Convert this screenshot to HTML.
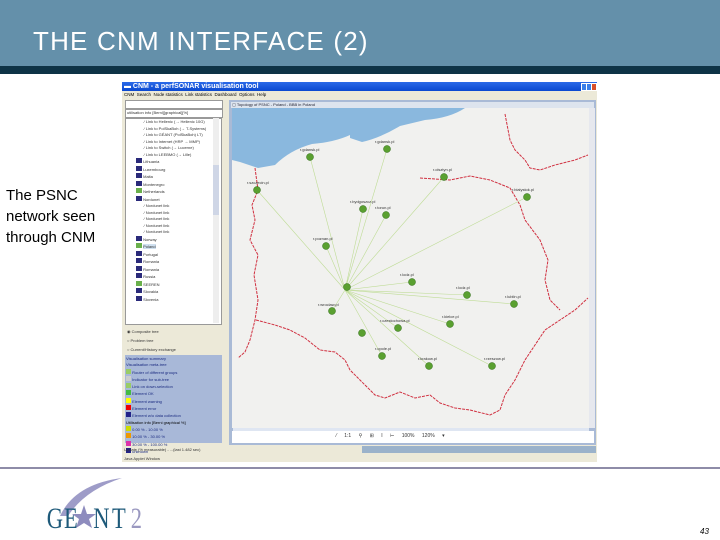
<!DOCTYPE html>
<html><head><style>
body{margin:0;width:720px;height:540px;position:relative;background:#fff;font-family:"Liberation Sans",sans-serif;overflow:hidden}
.a{position:absolute}
.t{font-size:4px;color:#333;white-space:nowrap}
</style></head><body>
<div class="a" style="left:0;top:0;width:720px;height:66px;background:#6490aa"></div>
<div class="a" style="left:0;top:66px;width:720px;height:8px;background:#0e3346"></div>
<div class="a" style="left:33px;top:26px;font-size:26px;color:#fff;letter-spacing:1.2px;line-height:30px">THE CNM INTERFACE (2)</div>
<div class="a" style="left:6px;top:185px;font-size:15px;line-height:21px;color:#000">The PSNC<br>network seen<br>through CNM</div>

<!-- app window -->
<div class="a" style="left:122px;top:82px;width:475px;height:380px;background:#ece9d8"></div>
<div class="a" style="left:122px;top:82px;width:475px;height:9px;background:linear-gradient(#2a6ae8,#0a48d0);color:#fff;font-size:7px;line-height:9px;font-weight:bold">&nbsp;▬ CNM - a perfSONAR visualisation tool</div>
<div class="a" style="left:581px;top:83px;width:4px;height:6px;background:#3b7fe8;border:1px solid #fff"></div>
<div class="a" style="left:586px;top:83px;width:4px;height:6px;background:#3b7fe8;border:1px solid #fff"></div>
<div class="a" style="left:591px;top:83px;width:4px;height:6px;background:#d8502a;border:1px solid #fff"></div>
<div class="a t" style="left:124px;top:92px;font-size:4.5px;color:#000">CNM &nbsp;Search &nbsp;Node statistics &nbsp;Link statistics &nbsp;Dashboard &nbsp;Options &nbsp;Help</div>

<!-- left panel -->
<div class="a" style="left:125px;top:100px;width:96px;height:7px;background:#fff;border:1px solid #999"></div>
<div class="a" style="left:125px;top:109px;width:96px;height:7px;background:#fff;border:1px solid #999"></div>
<div class="a t" style="left:127px;top:110px">utilisation info [Berni][graphical][%]</div>
<div class="a" style="left:125px;top:118px;width:95px;height:205px;background:#fff;border:1px solid #999"></div>
<div class="a" style="left:213px;top:118px;width:6px;height:205px;background:#eee"></div>
<div class="a" style="left:213px;top:165px;width:6px;height:50px;background:#cfd6e6"></div>
<div class="a" style="left:126px;top:119px;width:86px;line-height:6.5px;font-size:4px;color:#333">
<div style="padding-left:18px">⁄ Link to Hellenic (→ Hellenic 10G)</div>
<div style="padding-left:18px">⁄ Link to PolSkaBoh (→ T-Systems)</div>
<div style="padding-left:18px">⁄ Link to GÉANT (PolSkaBoh) LT)</div>
<div style="padding-left:18px">⁄ Link to Internet (HRP → MMP)</div>
<div style="padding-left:18px">⁄ Link to Switch (→ Lucerne)</div>
<div style="padding-left:18px">⁄ Link to LEEBMO (→ Lille)</div>
<div style="padding-left:10px"><span style="display:inline-block;width:6px;height:5px;background:#2a2a7a"></span> Lithuania</div>
<div style="padding-left:10px"><span style="display:inline-block;width:6px;height:5px;background:#2a2a7a"></span> Luxembourg</div>
<div style="padding-left:10px"><span style="display:inline-block;width:6px;height:5px;background:#2a2a7a"></span> Malta</div>
<div style="padding-left:10px"><span style="display:inline-block;width:6px;height:5px;background:#2a2a7a"></span> Montenegro</div>
<div style="padding-left:10px"><span style="display:inline-block;width:6px;height:5px;background:#6ab04c"></span> Netherlands</div>
<div style="padding-left:10px"><span style="display:inline-block;width:6px;height:5px;background:#2a2a7a"></span> Nordunet</div>
<div style="padding-left:18px">⁄ Nordunet link</div>
<div style="padding-left:18px">⁄ Nordunet link</div>
<div style="padding-left:18px">⁄ Nordunet link</div>
<div style="padding-left:18px">⁄ Nordunet link</div>
<div style="padding-left:18px">⁄ Nordunet link</div>
<div style="padding-left:10px"><span style="display:inline-block;width:6px;height:5px;background:#2a2a7a"></span> Norway</div>
<div style="padding-left:10px"><span style="display:inline-block;width:6px;height:5px;background:#6ab04c"></span> <span style="background:#cfe0f0">Poland</span></div>
<div style="padding-left:10px"><span style="display:inline-block;width:6px;height:5px;background:#2a2a7a"></span> Portugal</div>
<div style="padding-left:10px"><span style="display:inline-block;width:6px;height:5px;background:#2a2a7a"></span> Romania</div>
<div style="padding-left:10px"><span style="display:inline-block;width:6px;height:5px;background:#2a2a7a"></span> Romania</div>
<div style="padding-left:10px"><span style="display:inline-block;width:6px;height:5px;background:#2a2a7a"></span> Russia</div>
<div style="padding-left:10px"><span style="display:inline-block;width:6px;height:5px;background:#6ab04c"></span> SEEREN</div>
<div style="padding-left:10px"><span style="display:inline-block;width:6px;height:5px;background:#2a2a7a"></span> Slovakia</div>
<div style="padding-left:10px"><span style="display:inline-block;width:6px;height:5px;background:#2a2a7a"></span> Slovenia</div>
</div>
<div class="a t" style="left:127px;top:327px;line-height:9px">◉ Composite tree<br>○ Problem tree<br>○ Current/History exchange</div>
<div class="a" style="left:125px;top:355px;width:97px;height:88px;background:#a8b8d8"></div>
<div class="a" style="left:126px;top:356px;font-size:4px;line-height:6.3px;color:#1a2a80">
<div>Visualisation summary</div><div>Visualisation meta-tree</div>
<div><span style="display:inline-block;width:5px;height:5px;background:#9c6"></span> Router of different groups</div>
<div><span style="display:inline-block;width:5px;height:5px;background:#ccc"></span> Indicator for sub-tree</div>
<div><span style="display:inline-block;width:5px;height:5px;background:#9c6"></span> Link on down-selection</div>
<div><span style="display:inline-block;width:5px;height:5px;background:#4b4"></span> Element OK</div>
<div><span style="display:inline-block;width:5px;height:5px;background:#ff0"></span> Element warning</div>
<div><span style="display:inline-block;width:5px;height:5px;background:#e00"></span> Element error</div>
<div><span style="display:inline-block;width:5px;height:5px;background:#228"></span> Element w/o data collection</div>
<div style="color:#000">Utilisation info [Berni graphical %]</div>
<div><span style="display:inline-block;width:5px;height:5px;background:#cd0"></span> 0.00 % - 10.00 %</div>
<div><span style="display:inline-block;width:5px;height:5px;background:#e90"></span> 10.00 % - 30.00 %</div>
<div><span style="display:inline-block;width:5px;height:5px;background:#d3a"></span> 30.00 % - 100.00 %</div>
<div><span style="display:inline-block;width:5px;height:5px;background:#228"></span> unknown</div>
</div>

<!-- map frame -->
<div class="a" style="left:229px;top:100px;width:367px;height:345px;background:#a9bad6"></div>
<div class="a" style="left:231px;top:102px;width:363px;height:6px;background:#dde4ee;font-size:4px;line-height:6px;color:#223">&nbsp;▢ Topology of PSNC - Poland - BBB in Poland</div>
<div class="a" style="left:232px;top:108px;width:357px;height:320px;background:#f1f1ef;overflow:hidden">
<svg width="357" height="320" viewBox="232 108 357 320" style="position:absolute;left:0;top:0">
<path d="M232 108 L350 108 L350 135 Q 335 142 312 144 Q 290 150 275 165 L258 168 L240 162 L232 160 Z" fill="#8ab8de"/>
<path d="M350 108 L465 108 Q 450 118 425 120 L400 126 Q 380 138 362 142 L350 138 Z" fill="#8ab8de"/>
<g fill="none" stroke="#d03040" stroke-width="1" stroke-dasharray="3 1">
<path d="M255 168 L258 190 L252 205 L255 220 L250 240 L258 255 L254 275 L258 300 L255 320 L250 340 L245 352 L238 358"/>
<path d="M256 320 L275 325 L290 330 L305 338 L320 350 L335 352 L345 360 L350 370 L365 385 L375 395 L385 398 L400 392 L415 398 L430 395 L440 403 L455 408 L470 410 L490 415 L500 410 L505 395 L515 380 L525 360 L535 345 L545 330 L560 320 L575 310 L588 298"/>
<path d="M420 178 L450 180 L470 176 L490 180 L510 188 L520 205 L525 220 L540 240 L548 260 L545 280 L550 300 L560 310"/>
<path d="M505 114 L510 140 L515 150 L525 160 L530 168 L540 170 L555 165 L575 160 L588 155"/>
</g>
<g stroke="#bfdc96" stroke-width="0.6" fill="none">
<path d="M345 290 L310 157 M345 290 L257 190 M345 290 L387 149 M345 290 L444 177 M345 290 L527 197 M345 290 L386 215 M345 290 L363 209 M345 290 L467 295 M345 290 L514 304 M345 290 L450 324 M345 290 L398 328 M345 290 L382 356 M345 290 L429 366 M345 290 L492 366 M345 290 L412 282 M345 290 L332 311 M345 290 L326 246"/>
</g>
<g fill="#5aa030" stroke="#2a6a10" stroke-width="0.5">
<circle cx="310" cy="157" r="3.5"/><circle cx="257" cy="190" r="3.5"/><circle cx="387" cy="149" r="3.5"/><circle cx="444" cy="177" r="3.5"/><circle cx="527" cy="197" r="3.5"/><circle cx="386" cy="215" r="3.5"/><circle cx="363" cy="209" r="3.5"/><circle cx="467" cy="295" r="3.5"/><circle cx="514" cy="304" r="3.5"/><circle cx="450" cy="324" r="3.5"/><circle cx="398" cy="328" r="3.5"/><circle cx="362" cy="333" r="3.5"/><circle cx="382" cy="356" r="3.5"/><circle cx="429" cy="366" r="3.5"/><circle cx="492" cy="366" r="3.5"/><circle cx="412" cy="282" r="3.5"/><circle cx="332" cy="311" r="3.5"/><circle cx="326" cy="246" r="3.5"/><circle cx="347" cy="287" r="3.5"/>
</g>
<g font-size="4" fill="#333" font-family="Liberation Sans">
<text x="300" y="151">r.gdansk.pl</text><text x="247" y="184">r.szczecin.pl</text><text x="375" y="143">r.gdansk.pl</text><text x="433" y="171">r.olsztyn.pl</text><text x="512" y="191">r.bialystok.pl</text><text x="375" y="209">r.torun.pl</text><text x="350" y="203">r.bydgoszcz.pl</text><text x="313" y="240">r.poznan.pl</text><text x="456" y="289">r.lodz.pl</text><text x="505" y="298">r.lublin.pl</text><text x="442" y="318">r.kielce.pl</text><text x="380" y="322">r.czestochowa.pl</text><text x="318" y="306">r.wroclaw.pl</text><text x="375" y="350">r.opole.pl</text><text x="418" y="360">r.krakow.pl</text><text x="484" y="360">r.rzeszow.pl</text><text x="400" y="276">r.lodz.pl</text>
</g>
</svg>
</div>
<div class="a" style="left:589px;top:108px;width:6px;height:320px;background:#e6e8ee"></div>
<div class="a" style="left:233px;top:428px;width:356px;height:3px;background:#dfe6f2"></div>
<div class="a" style="left:232px;top:431px;width:362px;height:12px;background:#fff"></div>
<div class="a t" style="left:336px;top:433px;font-size:5px;word-spacing:6px">⁄ 1:1 ⚲ ⊞ I ⊢ 100% 120% ▾</div>
<div class="a" style="left:362px;top:446px;width:234px;height:7px;background:#9bb2ca"></div>
<div class="a t" style="left:124px;top:447px">Update (% measurable) - ...(last 1.482 sec)</div>
<div class="a t" style="left:124px;top:456px">Java Applet Window</div>

<div class="a" style="left:0;top:467px;width:720px;height:2px;background:#8e8ca8"></div>
<!-- logo -->
<svg class="a" style="left:40px;top:476px" width="110" height="58">
<path d="M20 40 Q 35 8 82 2 Q 45 14 28 40 Z" fill="#9e9cc8"/>
<g transform="scale(0.75,1)" font-family="Liberation Serif" font-size="30">
<text x="9" y="52" fill="#1e5a7a">G</text>
<text x="32" y="52" fill="#1e5a7a">E</text>
<text x="71" y="52" fill="#1e5a7a">N</text>
<text x="96" y="52" fill="#1e5a7a">T</text>
<text x="121" y="52" fill="#9a98c0">2</text>
</g>
<polygon points="44,29 47,38 56,38 49,43 52,52 44,47 36,52 39,43 32,38 41,38" fill="#8e8cbe"/>
</svg>
<div class="a" style="left:700px;top:527px;font-size:8px;font-style:italic">43</div>
</body></html>
